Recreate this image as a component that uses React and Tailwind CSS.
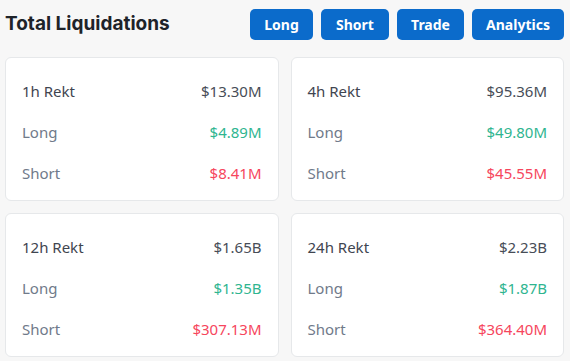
const cards = [
  { label: "1h Rekt", total: "$13.30M", long: "$4.89M", short: "$8.41M" },
  { label: "4h Rekt", total: "$95.36M", long: "$49.80M", short: "$45.55M" },
  { label: "12h Rekt", total: "$1.65B", long: "$1.35B", short: "$307.13M" },
  { label: "24h Rekt", total: "$2.23B", long: "$1.87B", short: "$364.40M" },
]

const buttons = [
  { text: "Long", w: "w-[63px]" },
  { text: "Short", w: "w-[68px]" },
  { text: "Trade", w: "w-[67px]" },
  { text: "Analytics", w: "w-[92px]" },
]

function RektCard({ label, total, long, short }) {
  return (
    <div className="h-[144px] rounded-[6px] border border-[#e6e8ea] bg-white px-4 pt-[13px] text-[15px]">
      <div className="flex h-[41px] items-center justify-between">
        <span className="text-[#3f4550]">{label}</span>
        <span className="text-[#474d57]">{total}</span>
      </div>
      <div className="flex h-[41px] items-center justify-between">
        <span className="text-[#707a8a]">Long</span>
        <span className="text-[#2fb590]">{long}</span>
      </div>
      <div className="flex h-[41px] items-center justify-between">
        <span className="text-[#707a8a]">Short</span>
        <span className="text-[#f6465d]">{short}</span>
      </div>
    </div>
  )
}

export default function App() {
  return (
    <div className="h-[361px] w-[570px] bg-[#f7f7f7] pl-[5px] pr-[6px] pt-[9px] font-['Noto_Sans',sans-serif]">
      <div className="flex items-center justify-between">
        <h1 className="font-['Inter',sans-serif] text-[19px] font-bold text-[#1e2329]">Total Liquidations</h1>
        <div className="flex gap-2">
          {buttons.map((b) => (
            <button
              key={b.text}
              className={`${b.w} h-[31px] rounded-[5px] bg-[#0b6bcb] text-[14px] font-bold text-white`}
            >
              {b.text}
            </button>
          ))}
        </div>
      </div>
      <div className="mt-[17px] grid grid-cols-2 gap-3">
        {cards.map((c) => (
          <RektCard key={c.label} {...c} />
        ))}
      </div>
    </div>
  )
}
